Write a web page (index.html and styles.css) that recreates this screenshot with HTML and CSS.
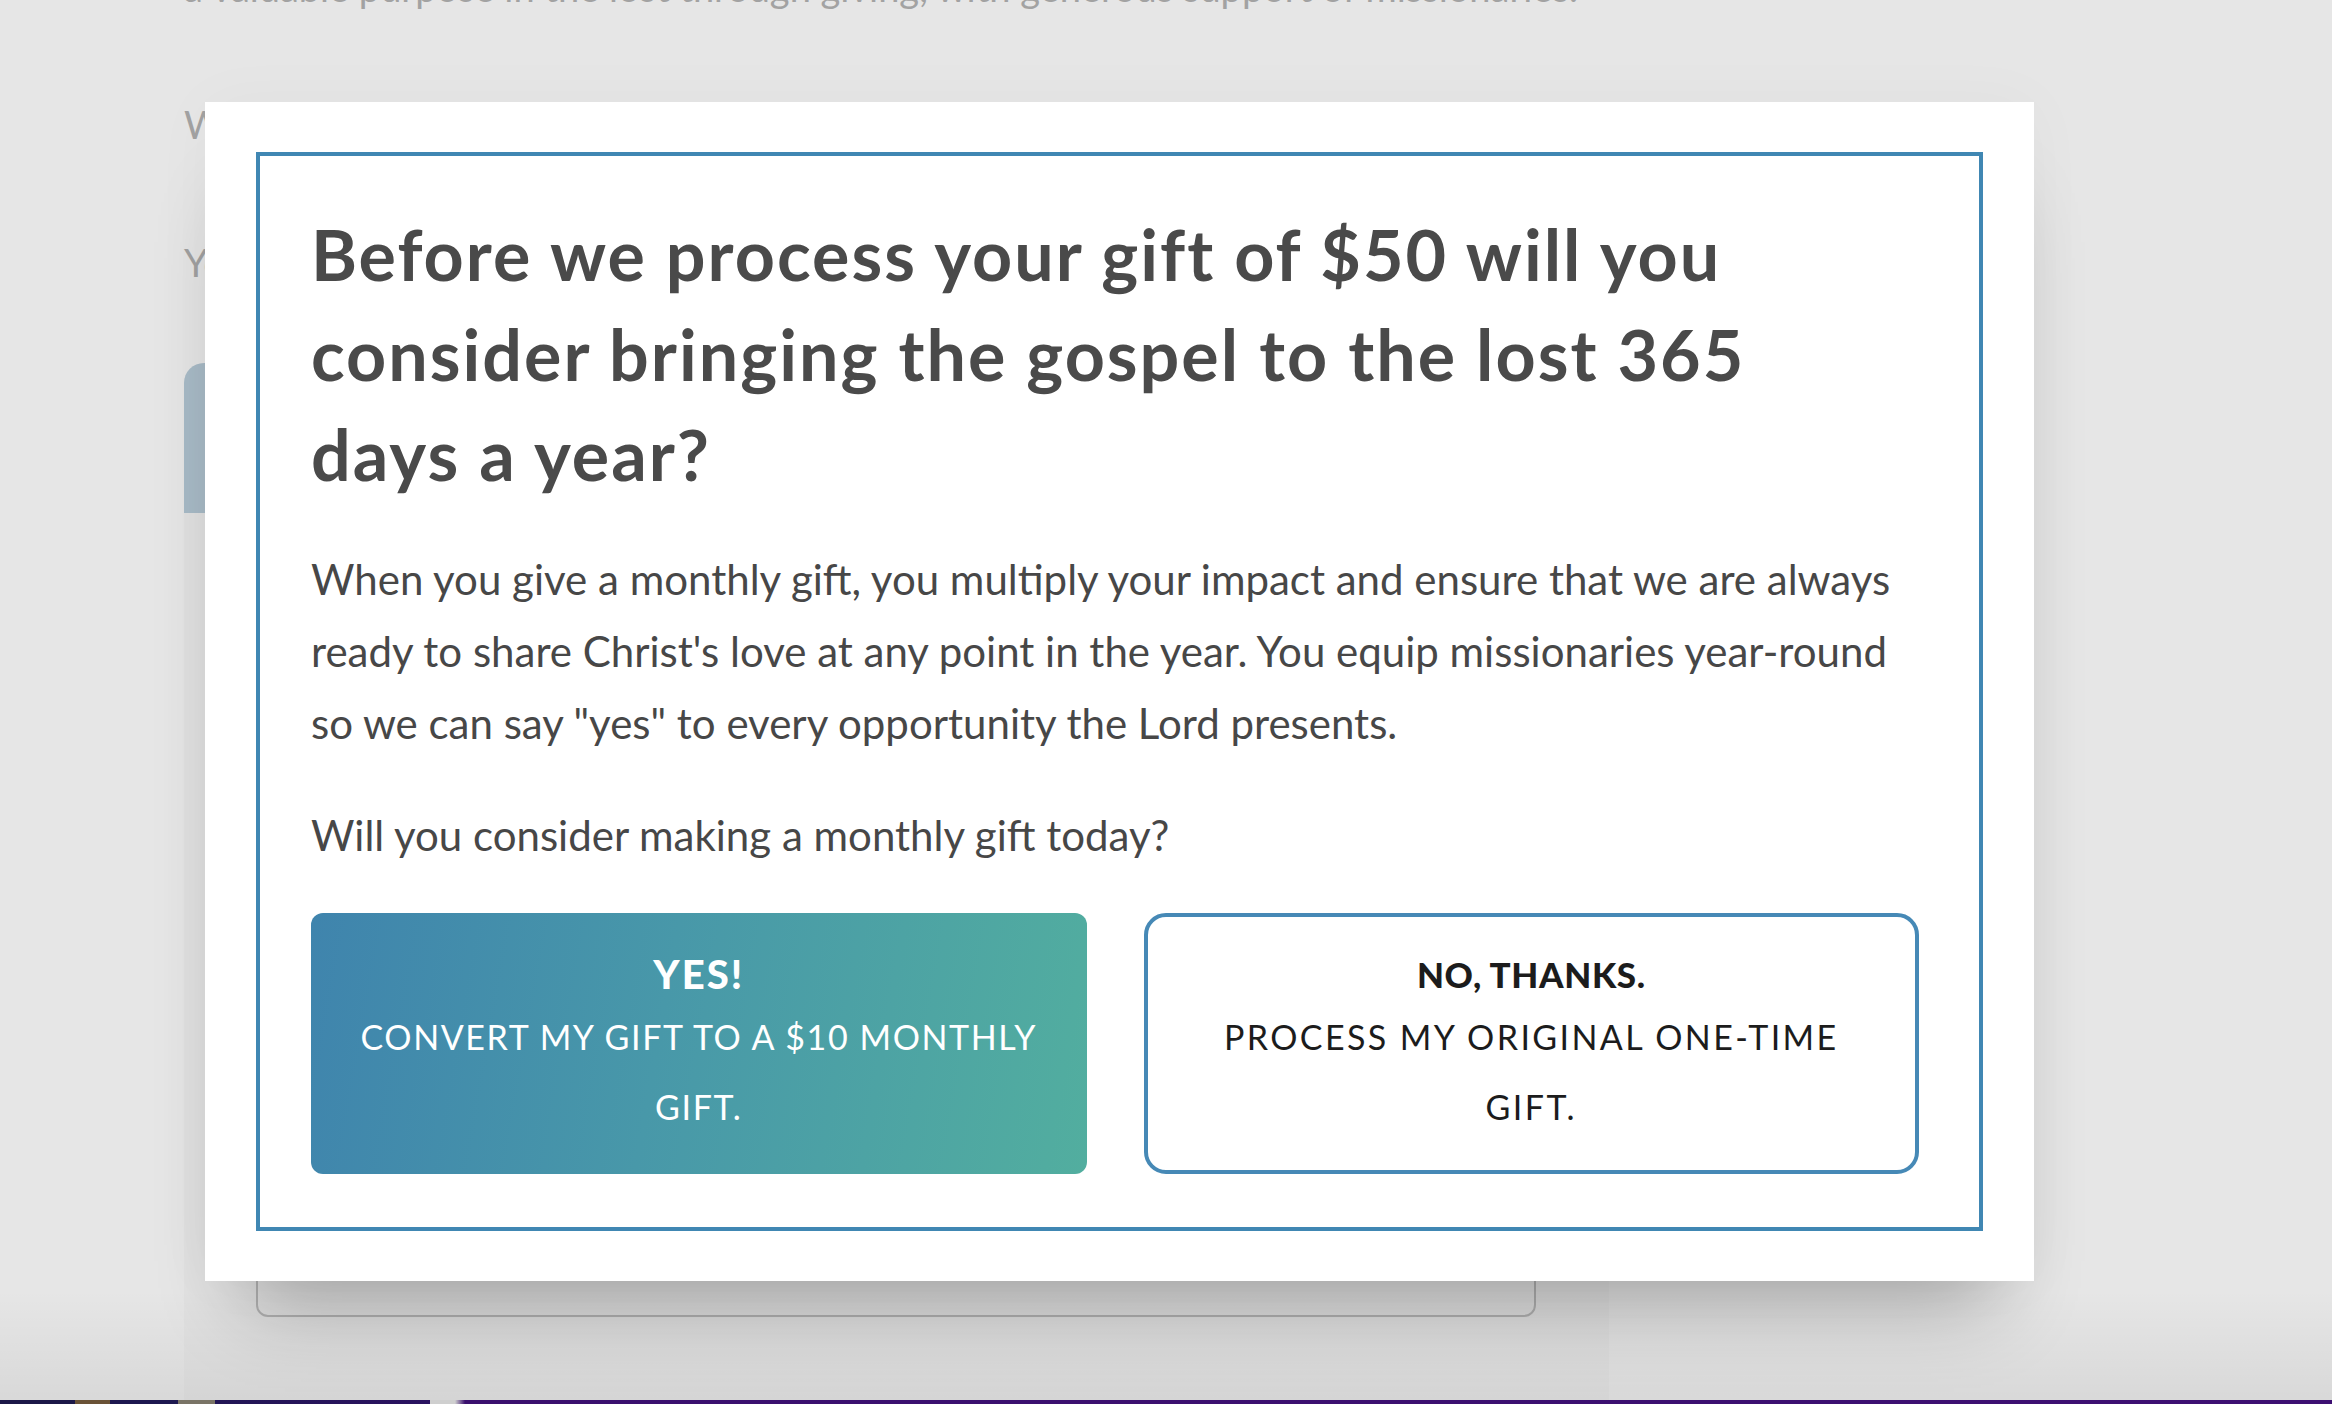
FILE: index.html
```html
<!DOCTYPE html>
<html lang="en">
<head>
<meta charset="utf-8">
<title>Monthly gift upsell</title>
<link rel="stylesheet" href="styles.css">
</head>
<body>
<div class="page">
  <p class="cut-line">a valuable purpose in the lost through giving, with generous support of missionaries.</p>
  <p class="bg-label first">What would you like to give?</p>
  <p class="bg-label second">Your gift amount</p>
  <div class="bg-card">
    <div class="bg-card-head"></div>
    <div class="bg-card-body">
      <div class="bg-input"></div>
    </div>
  </div>
</div>

<div class="modal">
  <div class="modal-frame">
    <h2 class="modal-title">Before we process your gift of $50 will you consider bringing the gospel to the lost 365 days a year?</h2>
    <p class="modal-text">When you give a monthly gift, you multiply your impact and ensure that we are always ready to share Christ's love at any point in the year. You equip missionaries year-round so we can say "yes" to every opportunity the Lord presents.</p>
    <p class="modal-text question">Will you consider making a monthly gift today?</p>
    <div class="choices">
      <button class="choice yes">
        <span class="choice-head">YES!</span>
        <span class="choice-sub">CONVERT MY GIFT TO A $10 MONTHLY GIFT.</span>
      </button>
      <button class="choice no">
        <span class="choice-head">NO, THANKS.</span>
        <span class="choice-sub">PROCESS MY ORIGINAL ONE-TIME GIFT.</span>
      </button>
    </div>
  </div>
</div>

<div class="bottom-shade"></div>
<div class="dock-strip"></div>
</body>
</html>
```

FILE: styles.css
```css
html, body {
  margin: 0;
  padding: 0;
}

body {
  width: 2332px;
  height: 1404px;
  overflow: hidden;
  background: #e6e6e6;
  font-family: "Lato", "Open Sans", sans-serif;
  position: relative;
}

/* ---------- page behind the overlay ---------- */
.page {
  padding-left: 184px;
  width: 1425px;
}

.cut-line {
  margin: -36px 0 0 0;
  font-size: 38px;
  line-height: 46px;
  color: #a2a2a2;
  white-space: nowrap;
}

.bg-label {
  margin: 0;
  font-size: 38px;
  line-height: 46px;
  color: #a2a2a2;
  white-space: nowrap;
}

.bg-label.first {
  margin-top: 91px;
}

.bg-label.second {
  margin-top: 92px;
}

.bg-card {
  margin-top: 78px;
  height: 1100px;
  background: #e2e2e2;
  border-radius: 20px 20px 0 0;
}

.bg-card-head {
  height: 150px;
  background: #a9bcc8;
  border-radius: 20px 20px 0 0;
}

.bg-card-body {
  padding: 704px 70px 0 72px;
}

.bg-input {
  width: 1280px;
  height: 100px;
  border: 2px solid #b3b3b3;
  border-radius: 12px;
  box-sizing: border-box;
}

/* ---------- modal ---------- */
.modal {
  position: absolute;
  left: 205px;
  top: 102px;
  width: 1829px;
  box-sizing: border-box;
  padding: 50px 51px;
  background: #ffffff;
  box-shadow: 0 60px 80px -40px rgba(0, 0, 0, 0.3), 0 0 60px rgba(0, 0, 0, 0.03);
}

.modal-frame {
  border: 4px solid #4087b3;
  padding: 48px 60px 53px 51px;
}

.modal-title {
  margin: 0 0 39px 0;
  max-width: 1560px;
  font-size: 70px;
  line-height: 100px;
  font-weight: 700;
  color: #4a4a4a;
  letter-spacing: 2px;
}

.modal-text {
  margin: 0 0 40px 0;
  font-size: 42px;
  line-height: 72px;
  color: #474747;
  letter-spacing: 0;
}

.modal-text.question {
  margin-bottom: 42px;
}

.choices {
  display: grid;
  grid-template-columns: 1fr 1fr;
  column-gap: 57px;
}

.choice {
  display: flex;
  flex-direction: column;
  align-items: center;
  justify-content: center;
  height: 261px;
  padding: 0 36px;
  font-family: "Lato", "Open Sans", sans-serif;
  text-align: center;
  box-sizing: border-box;
  cursor: pointer;
}

.choice.yes {
  border: none;
  border-radius: 12px;
  background: linear-gradient(100deg, #3f84ad 0%, #4898a9 45%, #52ae9f 100%);
  color: #ffffff;
}

.choice.no {
  border: 4px solid #4689b6;
  border-radius: 22px;
  background: #ffffff;
  color: #1c1c1c;
}

.choice-head {
  font-size: 40px;
  line-height: 56px;
  font-weight: 900;
  letter-spacing: 2px;
}

.choice.no .choice-head {
  font-size: 35px;
  letter-spacing: 0.6px;
}

.choice-sub {
  font-size: 34px;
  line-height: 70px;
  font-weight: 400;
  letter-spacing: 1.6px;
}

.choice.no .choice-sub {
  letter-spacing: 2.4px;
}

/* ---------- window chrome bits ---------- */
.bottom-shade {
  position: absolute;
  left: 0;
  right: 0;
  bottom: 4px;
  height: 110px;
  background: linear-gradient(to bottom, rgba(0, 0, 0, 0) 0%, rgba(0, 0, 0, 0.06) 100%);
  pointer-events: none;
}

.dock-strip {
  position: absolute;
  left: 0;
  right: 0;
  bottom: 0;
  height: 4px;
  background: linear-gradient(90deg,
    #1c1848 0, #1c1848 75px,
    #6a5236 75px, #6a5236 110px,
    #1d1850 110px, #1d1850 178px,
    #7a7466 178px, #7a7466 215px,
    #221555 215px, #2a1260 430px,
    #cfcfcf 430px, #cfcfcf 455px,
    #3a0f6e 465px, #3d0f72 100%);
}
```
